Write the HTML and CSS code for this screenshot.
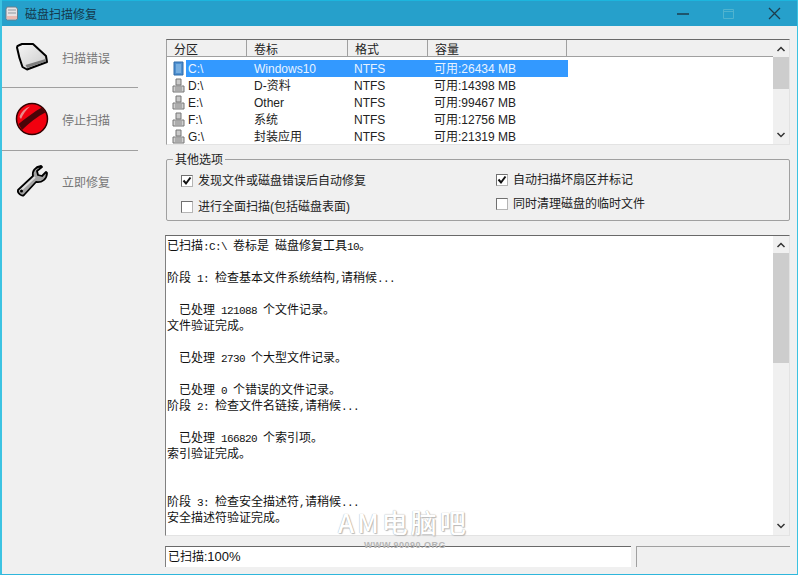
FILE: index.html
```html
<!DOCTYPE html>
<html>
<head>
    <title>磁盘扫描修复</title>
    <link rel="stylesheet" href="styles.css">
</head>
<body>
    <div class="window">
        <div class="titlebar">
            <svg class="app-icon" width="14" height="15" viewBox="0 0 14 15">
                <path d="M2 1h9l1.500 2v10l-1.500 1H2L1 13V3z" fill="#e6e2e4" stroke="#6b7f8c"/>
                <path d="M3 4h8M3 7h8" stroke="#8f98a0"/>
                <path d="M2 10h10v3H2z" fill="#e9b9b0"/>
            </svg>
            <span class="title-text">磁盘扫描修复</span>
            <div class="win-buttons">
                <svg class="win-btn" width="46" height="25" viewBox="0 0 46 25"><path d="M17 13h12" stroke="#1d3c4c" stroke-width="1.500"/></svg>
                <svg class="win-btn" width="34" height="25" viewBox="0 0 34 25"><path d="M17.500 8.500h10v9h-10zM17.500 10.500h10" fill="none" stroke="#4fb3cf"/></svg>
                <svg class="win-btn" width="56" height="25" viewBox="0 0 56 25"><path d="M29 7l11 11M40 7L29 18" stroke="#1d3c4c" stroke-width="1.300"/></svg>
            </div>
        </div>

        <div class="main">
            <div class="side">
                <div class="side-item">
                    <!-- hard disk -->
                    <svg class="side-icon" width="34" height="30" viewBox="0 0 34 30">
                        <defs>
                            <linearGradient id="diskTop" x1="0" y1="0" x2="1" y2="1">
                                <stop offset="0" stop-color="#f6f6f6"/>
                                <stop offset="1" stop-color="#c9c9c9"/>
                            </linearGradient>
                        </defs>
                        <path d="M2 5.500Q2 4 3.500 3.500L7 2H18L31 14 32 20 12 27.500 7.500 25Q4 16 2 5.500z" fill="url(#diskTop)" stroke="#000" stroke-width="2" stroke-linejoin="round"/>
                        <path d="M10.500 23l20-6 .5 2.500-19 6.500z" fill="#7d7d7d"/>
                    </svg>
                    <span>扫描错误</span>
                </div>
                <div class="side-item">
                    <!-- stop ball -->
                    <svg class="side-icon" width="34" height="34" viewBox="0 0 34 34">
                        <circle cx="17" cy="17" r="15.500" fill="#f2000f" stroke="#300" stroke-width="1.500"/>
                        <path d="M3.500 22C10 17 20 9 27 5.500l3.500 5C23 14 13 22 7 28z" fill="#4a0508"/>
                        <path d="M4.500 15C6 10 10 6 15 4.500 11 8 8 12 6 17z" fill="#e88a8a"/>
                    </svg>
                    <span>停止扫描</span>
                </div>
                <div class="side-item">
                    <!-- wrench -->
                    <svg class="side-icon" width="34" height="34" viewBox="0 0 34 34">
                        <path d="M3 26L18 12c-1-5 2-9 8-10l1 1-5 4 1 4 4 1 4-4 1 1c0 6-5 10-11 9L9 31c-2 2-7-2-6-5z" fill="#a3a3a3" stroke="#000" stroke-width="1.800" stroke-linejoin="round"/>
                        <path d="M5 27L20 13" stroke="#dcdcdc" stroke-width="2"/>
                        <circle cx="6.500" cy="27" r="1.500" fill="#000"/>
                    </svg>
                    <span>立即修复</span>
                </div>
            </div>

            <div class="content">
                <div class="list-box">
                    <div class="list-inner">
                        <div class="list-head">
                            <div class="col-a">分区</div>
                            <div class="col-b">卷标</div>
                            <div class="col-c">格式</div>
                            <div class="col-d">容量</div>
                        </div>
                        <div class="list-rows">
                            <div class="row selected">
                                <svg class="drive" width="13" height="15" viewBox="0 0 13 15"><path d="M2 1h9v13H2z" fill="#4d8fd0" stroke="#2f6aa8"/><path d="M4 3h5v9H4z" fill="#77aee0"/></svg>
                                <div class="row-body"><span>C:\</span><span>Windows10</span><span>NTFS</span><span>可用:26434 MB</span></div>
                            </div>
                            <div class="row">
                                <svg class="drive" width="13" height="15" viewBox="0 0 13 15"><path d="M4 1h5v6H4z" fill="#c9c9c9" stroke="#777"/><path d="M1 8h11v6H1z" fill="#d0d0d0" stroke="#777"/><path d="M3 10h7M3 12h7" stroke="#888"/></svg>
                                <div class="row-body"><span>D:\</span><span>D-资料</span><span>NTFS</span><span>可用:14398 MB</span></div>
                            </div>
                            <div class="row">
                                <svg class="drive" width="13" height="15" viewBox="0 0 13 15"><path d="M4 1h5v6H4z" fill="#c9c9c9" stroke="#777"/><path d="M1 8h11v6H1z" fill="#d0d0d0" stroke="#777"/><path d="M3 10h7M3 12h7" stroke="#888"/></svg>
                                <div class="row-body"><span>E:\</span><span>Other</span><span>NTFS</span><span>可用:99467 MB</span></div>
                            </div>
                            <div class="row">
                                <svg class="drive" width="13" height="15" viewBox="0 0 13 15"><path d="M4 1h5v6H4z" fill="#c9c9c9" stroke="#777"/><path d="M1 8h11v6H1z" fill="#d0d0d0" stroke="#777"/><path d="M3 10h7M3 12h7" stroke="#888"/></svg>
                                <div class="row-body"><span>F:\</span><span>系统</span><span>NTFS</span><span>可用:12756 MB</span></div>
                            </div>
                            <div class="row">
                                <svg class="drive" width="13" height="15" viewBox="0 0 13 15"><path d="M4 1h5v6H4z" fill="#c9c9c9" stroke="#777"/><path d="M1 8h11v6H1z" fill="#d0d0d0" stroke="#777"/><path d="M3 10h7M3 12h7" stroke="#888"/></svg>
                                <div class="row-body"><span>G:\</span><span>封装应用</span><span>NTFS</span><span>可用:21319 MB</span></div>
                            </div>
                        </div>
                    </div>
                    <div class="scrollbar">
                        <svg class="arrow" width="16" height="17" viewBox="0 0 16 17"><path d="M4.500 11L8 7.500l3.500 3.500" fill="none" stroke="#333" stroke-width="1.500"/></svg>
                        <div class="thumb thumb-list"></div>
                        <svg class="arrow arrow-down" width="16" height="17" viewBox="0 0 16 17"><path d="M4.500 6L8 9.500 11.500 6" fill="none" stroke="#333" stroke-width="1.500"/></svg>
                    </div>
                </div>

                <div class="group">
                    <div class="group-title">其他选项</div>
                    <div class="opts opts-left">
                        <label class="opt">
                            <span class="check"><svg width="10" height="10" viewBox="0 0 10 10"><path d="M1.500 4.500L4 7.500 8.500 1.500" fill="none" stroke="#111" stroke-width="2"/></svg></span>
                            发现文件或磁盘错误后自动修复
                        </label>
                        <label class="opt">
                            <span class="check"></span>
                            进行全面扫描(包括磁盘表面)
                        </label>
                    </div>
                    <div class="opts opts-right">
                        <label class="opt">
                            <span class="check"><svg width="10" height="10" viewBox="0 0 10 10"><path d="M1.500 4.500L4 7.500 8.500 1.500" fill="none" stroke="#111" stroke-width="2"/></svg></span>
                            自动扫描坏扇区并标记
                        </label>
                        <label class="opt">
                            <span class="check"></span>
                            同时清理磁盘的临时文件
                        </label>
                    </div>
                </div>

                <div class="log-box">
<pre class="log">已扫描<i>:C:\ </i>卷标是<i> </i>磁盘修复工具<i>10</i>。

阶段<i> 1: </i>检查基本文件系统结构<i>,</i>请稍候<i>...</i>

<i>  </i>已处理<i> 121088 </i>个文件记录。
文件验证完成。

<i>  </i>已处理<i> 2730 </i>个大型文件记录。

<i>  </i>已处理<i> 0 </i>个错误的文件记录。
阶段<i> 2: </i>检查文件名链接<i>,</i>请稍候<i>...</i>

<i>  </i>已处理<i> 166820 </i>个索引项。
索引验证完成。


阶段<i> 3: </i>检查安全描述符<i>,</i>请稍候<i>...</i>
安全描述符验证完成。</pre>
                    <div class="scrollbar">
                        <svg class="arrow" width="16" height="17" viewBox="0 0 16 17"><path d="M4.500 11L8 7.500l3.500 3.500" fill="none" stroke="#333" stroke-width="1.500"/></svg>
                        <div class="thumb thumb-log"></div>
                        <svg class="arrow arrow-down" width="16" height="17" viewBox="0 0 16 17"><path d="M4.500 6L8 9.500 11.500 6" fill="none" stroke="#333" stroke-width="1.500"/></svg>
                    </div>
                </div>

                <div class="status">
                    <div class="status-text">已扫描:<b>100%</b></div>
                    <div class="status-side"></div>
                </div>
            </div>
        </div>

        <div class="watermark">
            <div class="wm-big">AM电脑吧</div>
            <div class="wm-small">WWW.90090.ORG</div>
        </div>
    </div>
</body>
</html>
```

FILE: styles.css
```css
* {
    box-sizing: border-box;
}
body {
    margin: 0;
    font-family: "Liberation Sans", "Noto Sans CJK SC", sans-serif;
    font-size: 12px;
    color: #222;
}
.window {
    position: relative;
    width: 798px;
    height: 575px;
    display: flex;
    flex-direction: column;
    overflow: hidden;
    background-color: #f0f0f0;
    border-left: 2px solid #3cc3e2;
    border-right: 1px solid #3cc3e2;
    border-bottom: 1px solid #2fb6dc;
}

/* title bar */
.titlebar {
    height: 26px;
    margin-left: -2px;
    margin-right: -1px;
    flex-shrink: 0;
    display: flex;
    align-items: center;
    padding-left: 5px;
    background-color: #26a0cb;
    border-top: 1px solid #1cb6de;
}
.app-icon {
    margin-right: 6px;
}
.title-text {
    color: #15384c;
    font-size: 12px;
}
.win-buttons {
    margin-left: auto;
    display: flex;
    margin-right: 2px;
}
.win-btn {
    display: block;
}

.main {
    flex: 1;
    display: flex;
    min-height: 0;
}

/* left buttons */
.side {
    width: 136px;
    flex-shrink: 0;
}
.side-item {
    height: 62px;
    display: flex;
    align-items: center;
    border-bottom: 1px solid #a0a0a0;
    margin-left: -2px;
    padding-left: 15px;
    color: #777;
}
.side-item:nth-child(2) {
    height: 63px;
}
.side-item:last-child {
    height: 60px;
    border-bottom: none;
}
.side-icon {
    flex-shrink: 0;
}
.side-item span {
    margin: 1px 0 0 13px;
}

.content {
    flex: 1;
    min-width: 0;
    padding: 13px 7px 0 28px;
}

/* drive list */
.list-box {
    height: 106px;
    display: flex;
    background-color: #fff;
    border-top: 1px solid #696969;
    border-left: 1px solid #a0a0a0;
    border-bottom: 1px solid #e3e3e3;
    border-right: 1px solid #e3e3e3;
}
.list-inner {
    flex: 1;
    min-width: 0;
    overflow: hidden;
}
.list-head {
    height: 17px;
    display: flex;
    background-color: #f0f0f0;
    border-bottom: 1px solid #a0a0a0;
    color: #222;
}
.list-head div {
    padding: 2px 0 0 7px;
    border-right: 1px solid #a0a0a0;
    line-height: 17px;
}
.col-a { width: 80px; }
.col-b { width: 101px; }
.col-c { width: 80px; }
.col-d { width: 139px; }
.list-rows {
    padding-top: 3px;
}
.row {
    height: 17px;
    display: flex;
    align-items: center;
}
.drive {
    width: 13px;
    margin: 0 1px 0 5px;
    flex-shrink: 0;
}
.row-body {
    width: 382px;
    height: 17px;
    padding-left: 2px;
    display: grid;
    grid-template-columns: 66px 100px 80px 134px;
    line-height: 19px;
    white-space: nowrap;
}
.selected .row-body {
    background-color: #3399ff;
    color: #e8f3ff;
}

/* scroll bars */
.scrollbar {
    width: 16px;
    flex-shrink: 0;
    display: flex;
    flex-direction: column;
    background-color: #f0f0f0;
}
.arrow {
    display: block;
    flex-shrink: 0;
}
.arrow-down {
    margin-top: auto;
}
.thumb {
    background-color: #cdcdcd;
}
.thumb-list { height: 32px; }
.thumb-log { height: 110px; }

/* options group */
.group {
    position: relative;
    height: 62px;
    margin-top: 14px;
    display: flex;
    border: 1px solid #a0a0a0;
    border-radius: 2px;
}
.group-title {
    position: absolute;
    left: 6px;
    top: -8px;
    padding: 0 2px;
    line-height: 16px;
    background-color: #f0f0f0;
}
.opts {
    display: flex;
    flex-direction: column;
}
.opts-left {
    width: 329px;
    padding: 13px 0 0 14px;
    gap: 10px;
}
.opts-right {
    padding-top: 12px;
    gap: 8px;
}
.opt {
    display: flex;
    align-items: center;
    height: 16px;
    line-height: 16px;
}
.check {
    width: 12px;
    height: 12px;
    margin-right: 5px;
    display: flex;
    align-items: center;
    justify-content: center;
    background-color: #fff;
    border: 1px solid #707070;
    border-right-color: #b5b5b5;
    border-bottom-color: #b5b5b5;
}

/* scan output */
.log-box {
    height: 301px;
    margin: 14px 0 0 -1px;
    display: flex;
    background-color: #fff;
    border-top: 1px solid #696969;
    border-left: 1px solid #808080;
    border-bottom: 1px solid #e3e3e3;
    border-right: 1px solid #e3e3e3;
}
.log {
    flex: 1;
    margin: 0;
    padding: 1px 0 0 1px;
    overflow: hidden;
    font-family: "Noto Sans CJK SC", sans-serif;
    font-size: 12px;
    line-height: 16px;
    color: #111;
}
/* half-width latin runs between the wide characters */
.log i {
    font-family: "Liberation Mono", monospace;
    font-style: normal;
    font-size: 11px;
    letter-spacing: -0.6px;
    line-height: 0;
}

/* status bar */
.status {
    height: 21px;
    margin: 10px 0 0 -1px;
    display: flex;
    gap: 5px;
}
.status-text {
    flex: 1;
    padding-left: 2px;
    line-height: 19px;
    background-color: #fff;
    border-top: 1px solid #696969;
    border-left: 1px solid #808080;
    color: #111;
}
.status-text b {
    font-weight: normal;
    font-size: 13px;
}
.status-side {
    width: 154px;
    border-top: 1px solid #a0a0a0;
    border-left: 1px solid #a0a0a0;
}

/* site stamp sitting over the window */
.watermark {
    position: absolute;
    left: 336px;
    top: 507px;
    pointer-events: none;
}
.wm-big {
    font-family: "Noto Sans CJK SC", sans-serif;
    font-size: 26px;
    font-weight: 500;
    line-height: 30px;
    letter-spacing: 3px;
    color: #fff;
    white-space: nowrap;
    text-shadow: 0 0 1px #9a9a9a, 1px 1px 1px #bdbdbd;
}
.wm-small {
    margin: 3px 0 0 26px;
    font-size: 9px;
    font-weight: bold;
    line-height: 11px;
    letter-spacing: 0.5px;
    color: #b5b5b5;
}
```
